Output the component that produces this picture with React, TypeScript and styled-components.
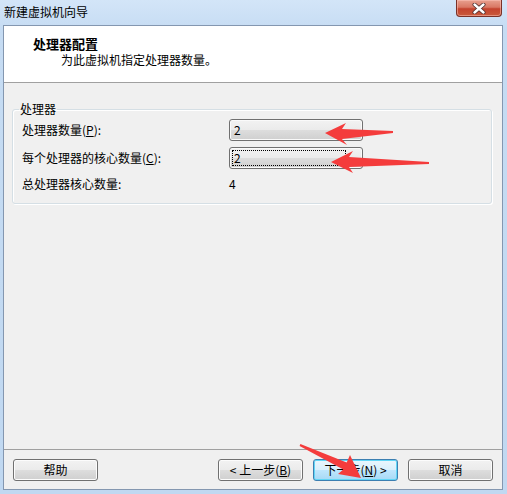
import React from "react";
import styled, { createGlobalStyle } from "styled-components";

const Global = createGlobalStyle`
  html, body { margin: 0; padding: 0; background: #fff; }
  body { font-family: "Microsoft YaHei", "Noto Sans CJK SC", "Noto Sans", sans-serif; font-size: 12px; color: #000; }
`;

const Window = styled.div`
  position: relative;
  width: 507px;
  height: 494px;
  display: flex;
  flex-direction: column;
  background: linear-gradient(to bottom, #d3e5f8 0px, #c6dcf3 30px, #c0d8f1 100%);
  overflow: hidden;
`;

const TitleBar = styled.div`
  height: 25px;
  flex: none;
  display: flex;
  justify-content: space-between;
  align-items: flex-start;
  padding-left: 4px;
`;

const TitleText = styled.span`
  line-height: 24px;
  font-size: 12px;
  color: #000;
`;

const CloseButton = styled.div`
  width: 44px;
  height: 16px;
  margin-right: 5px;
  border: 1px solid #7a3128;
  border-top: none;
  border-radius: 0 0 4px 4px;
  background: linear-gradient(to bottom, #e8a08f 0%, #d97864 45%, #c4432e 55%, #c95a3c 100%);
  box-shadow: inset 0 0 0 1px rgba(255, 200, 190, 0.5);
  display: flex;
  align-items: center;
  justify-content: center;
`;

const Client = styled.div`
  flex: 1;
  margin: 0 4px 4px 3px;
  border: 1px solid #8497b0;
  background: #f0f0f0;
  display: flex;
  flex-direction: column;
`;

const Header = styled.div`
  height: 56px;
  flex: none;
  background: #fff;
  border-bottom: 1px solid #a0a0a0;
  padding: 10px 0 0 29px;
  box-sizing: border-box;
  height: 57px;
`;

const HeaderTitle = styled.div`
  font-weight: bold;
  font-size: 13px;
  line-height: 16px;
`;

const HeaderSub = styled.div`
  font-size: 12px;
  line-height: 16px;
  margin-left: 28px;
`;

const Body = styled.div`
  flex: 1;
  padding: 0 10px 0 8px;
`;

const Group = styled.fieldset`
  margin: 18px 0 0 0;
  padding: 2px 0 10px 9px;
  border: 1px solid #d5dfe5;
  border-radius: 3px;
  box-shadow: inset 1px 1px 0 #fff, 1px 1px 0 #fff;
  min-width: 0;
`;

const Legend = styled.legend`
  padding: 0 1px;
  margin-left: -3px;
  line-height: 16px;
  font-size: 12px;
`;

const Rows = styled.div`
  display: grid;
  grid-template-columns: 207px 134px;
  grid-template-rows: 22px 22px 18px;
  row-gap: 6px;
  align-items: center;
`;

const Label = styled.span`
  line-height: 16px;
`;

const Mnemonic = styled.span`
  text-decoration: underline;
`;

const Combo = styled.div`
  height: 22px;
  box-sizing: border-box;
  border: 1px solid #707070;
  border-radius: 3px;
  background: linear-gradient(to bottom, #f2f2f2 0%, #ebebeb 48%, #dddddd 52%, #cfcfcf 100%);
  box-shadow: inset 0 0 0 1px #fafafa;
  display: flex;
  align-items: center;
  padding-left: 2px;
`;

const ComboValue = styled.span<{ $focused?: boolean }>`
  line-height: 14px;
  padding-left: 1px;
  width: ${(p) => (p.$focused ? "111px" : "auto")};
  border: 1px dotted ${(p) => (p.$focused ? "#000" : "transparent")};
`;

const Value = styled.span`
  line-height: 16px;
`;

const Footer = styled.div`
  flex: none;
  border-top: 1px solid #a0a0a0;
  padding: 9px 9px 8px 9px;
  display: flex;
  align-items: center;
`;

const Spacer = styled.div`
  flex: 1;
`;

const NavGroup = styled.div`
  display: flex;
  gap: 10px;
`;

const Button = styled.button<{ $default?: boolean }>`
  width: 85px;
  height: 22px;
  box-sizing: border-box;
  padding: 0;
  font-family: inherit;
  font-size: 12px;
  color: #000;
  border-radius: 3px;
  border: 1px solid ${(p) => (p.$default ? "#3c7fb1" : "#707070")};
  background: ${(p) =>
    p.$default
      ? "linear-gradient(to bottom, #eaf6fd 0%, #d9f0fc 48%, #bee6fd 52%, #a7d9f5 100%)"
      : "linear-gradient(to bottom, #f2f2f2 0%, #ebebeb 48%, #dddddd 52%, #cfcfcf 100%)"};
  box-shadow: inset 0 0 0 1px ${(p) => (p.$default ? "#61d6f6" : "#fcfcfc")};
  line-height: 18px;
`;

const Overlay = styled.svg`
  position: absolute;
  left: 0;
  top: 0;
  pointer-events: none;
`;

export default function App() {
  return (
    <>
      <Global />
      <Window>
        <TitleBar>
          <TitleText>新建虚拟机向导</TitleText>
          <CloseButton>
            <svg width="14" height="11" viewBox="0 0 14 11">
              <path d="M2.5 1.5 L11.5 9.5 M11.5 1.5 L2.5 9.5" stroke="#4a2a2a" strokeWidth="4" strokeLinecap="round" />
              <path d="M2.5 1.5 L11.5 9.5 M11.5 1.5 L2.5 9.5" stroke="#ffffff" strokeWidth="2.4" strokeLinecap="round" />
            </svg>
          </CloseButton>
        </TitleBar>
        <Client>
          <Header>
            <HeaderTitle>处理器配置</HeaderTitle>
            <HeaderSub>为此虚拟机指定处理器数量。</HeaderSub>
          </Header>
          <Body>
            <Group>
              <Legend>处理器</Legend>
              <Rows>
                <Label>
                  处理器数量(<Mnemonic>P</Mnemonic>):
                </Label>
                <Combo>
                  <ComboValue>2</ComboValue>
                </Combo>
                <Label>
                  每个处理器的核心数量(<Mnemonic>C</Mnemonic>):
                </Label>
                <Combo>
                  <ComboValue $focused>2</ComboValue>
                </Combo>
                <Label>总处理器核心数量:</Label>
                <Value>4</Value>
              </Rows>
            </Group>
          </Body>
          <Footer>
            <Button>帮助</Button>
            <Spacer />
            <NavGroup>
              <Button>
                &lt; 上一步(<Mnemonic>B</Mnemonic>)
              </Button>
              <Button $default>
                下一步(<Mnemonic>N</Mnemonic>) &gt;
              </Button>
              <Button>取消</Button>
            </NavGroup>
          </Footer>
        </Client>
        <Overlay width="507" height="494" viewBox="0 0 507 494">
          <polygon
            fill="#f43c3c"
            points="325,133 346,123 342,129 393,131 393,133 342,139 347,145"
          />
          <polygon
            fill="#f43c3c"
            points="331,162 353,151 349,157 429,162 429,164 349,167 353,173"
          />
          <polygon
            fill="#f43c3c"
            points="361,478 338,474 343.3,469.6 299.6,445.9 300.4,444.1 346.7,462.4 350,455"
          />
        </Overlay>
      </Window>
    </>
  );
}
